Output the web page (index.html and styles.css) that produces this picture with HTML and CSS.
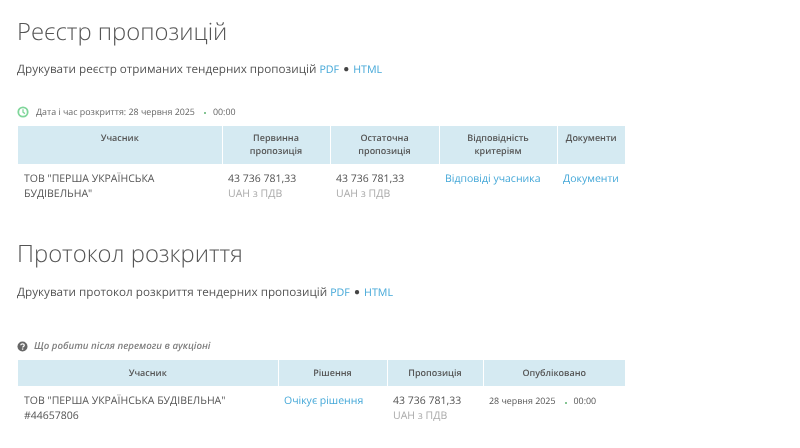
FILE: index.html
```html
<!DOCTYPE html>
<html lang="uk">
<head>
<meta charset="utf-8">
<title>Реєстр пропозицій</title>
<link rel="stylesheet" href="styles.css">
</head>
<body>
<main class="page">
  <section class="block block-registry">
    <h1 class="title">Реєстр пропозицій</h1>
    <p class="print">Друкувати реєстр отриманих тендерних пропозицій <a href="#">PDF</a> <span class="bullet">●</span> <a href="#">HTML</a></p>
    <div class="note note-date">
      <svg class="icon" width="12" height="12" viewBox="0 0 12 12"><circle cx="6" cy="6" r="4.7" fill="none" stroke="#7fd69a" stroke-width="1.8"/><path d="M6 3.2V6.2L8 7.6" fill="none" stroke="#7fd69a" stroke-width="1.3"/></svg>
      <span>Дата і час розкриття: 28 червня 2025</span><span class="dot"></span><span>00:00</span>
    </div>
    <table class="grid">
      <colgroup><col class="c1"><col class="c2"><col class="c3"><col class="c4"><col class="c5"></colgroup>
      <thead>
        <tr><th>Учасник</th><th>Первинна<br>пропозиція</th><th>Остаточна<br>пропозиція</th><th>Відповідність<br>критеріям</th><th>Документи</th></tr>
      </thead>
      <tbody>
        <tr>
          <td>ТОВ "ПЕРША УКРАЇНСЬКА<br>БУДІВЕЛЬНА"</td>
          <td>43 736 781,33<br><span class="muted">UAH з ПДВ</span></td>
          <td>43 736 781,33<br><span class="muted">UAH з ПДВ</span></td>
          <td><a href="#">Відповіді учасника</a></td>
          <td><a href="#">Документи</a></td>
        </tr>
      </tbody>
    </table>
  </section>
  <section class="block block-protocol">
    <h1 class="title">Протокол розкриття</h1>
    <p class="print">Друкувати протокол розкриття тендерних пропозицій <a href="#">PDF</a> <span class="bullet">●</span> <a href="#">HTML</a></p>
    <div class="note note-help">
      <svg class="icon" width="11" height="11" viewBox="0 0 11 11"><circle cx="5.5" cy="5.5" r="5" fill="#666"/><path d="M3.7 4.3C3.8 3.3 4.5 2.8 5.5 2.8C6.6 2.8 7.3 3.4 7.3 4.2C7.3 5.4 5.6 5.4 5.6 6.6" fill="none" stroke="#fff" stroke-width="1.2"/><rect x="4.9" y="7.4" width="1.4" height="1.3" fill="#fff"/></svg>
      <em>Що робити після перемоги в аукціоні</em>
    </div>
    <table class="grid grid-protocol">
      <colgroup><col class="p1"><col class="p2"><col class="p3"><col class="p4"></colgroup>
      <thead>
        <tr><th>Учасник</th><th>Рішення</th><th>Пропозиція</th><th>Опубліковано</th></tr>
      </thead>
      <tbody>
        <tr>
          <td>ТОВ "ПЕРША УКРАЇНСЬКА БУДІВЕЛЬНА"<br>#44657806</td>
          <td><a href="#">Очікує рішення</a></td>
          <td>43 736 781,33<br><span class="muted">UAH з ПДВ</span></td>
          <td class="published"><span>28 червня 2025</span><span class="dot"></span><span>00:00</span></td>
        </tr>
      </tbody>
    </table>
  </section>
</main>
</body>
</html>
```
FILE: styles.css
```css
* { box-sizing: border-box; }
html, body { margin: 0; padding: 0; background: #fff; overflow: hidden; }
body { font-family: "Open Sans", sans-serif; color: #555; height: 448px; text-rendering: geometricPrecision; }
.page { padding: 15px 0 0 17px; width: 626px; filter: blur(0.3px); }
a { color: #45a8d8; text-decoration: none; }
.title { margin: 0; font-size: 23.8px; font-weight: 300; line-height: 32px; color: #555; }
.print { margin: 14px 0 0; font-size: 11.7px; line-height: 16px; color: #555; }
.print a { font-size: 10.7px; }
.bullet { font-size: 10px; line-height: 0; vertical-align: 1px; color: #444; margin: 0 1px; }
.note { display: flex; align-items: center; font-size: 8.9px; line-height: 14px; color: #666; }
.note-date { margin-top: 27px; height: 14px; }
.note-help { margin-top: 38px; height: 14px; font-size: 9.7px; font-weight: 600; color: #808080; }
.note-date .icon { margin-right: 7px; }
.note-help .icon { margin-right: 6px; }
.dot { display: inline-block; width: 2px; height: 2px; border-radius: 50%; background: #5cb270; margin: 1px 7px 0 9px; }
.grid { table-layout: fixed; width: 607px; margin: 7px 0 0 1px; border-collapse: collapse; }
.grid th { background: #d5eaf2; border-left: 1px solid #fff; border-right: 1px solid #fff; padding: 5px 4px 6px; font-size: 9px; font-weight: 600; line-height: 13px; color: #555; vertical-align: top; text-align: center; height: 38px; }
.grid th:first-child { border-left: 0; }
.grid th:last-child { border-right: 0; }
.grid td { padding: 8px 6px 0; font-size: 10.5px; line-height: 15px; vertical-align: top; color: #555; }
.muted { color: #aaa; }
.c1 { width: 204px; } .c2 { width: 108px; } .c3 { width: 109px; } .c4 { width: 118px; } .c5 { width: 68px; }
.p1 { width: 260px; } .p2 { width: 109px; } .p3 { width: 96px; } .p4 { width: 142px; }
.grid-protocol th { height: 26px; padding-top: 6px; }
.grid-protocol td { padding-top: 8px; }
.grid-protocol td.published { font-size: 8.9px; padding-top: 7px; }
.block-protocol { margin-top: 35px; }
.block-protocol .print { margin-top: 15px; }
```
